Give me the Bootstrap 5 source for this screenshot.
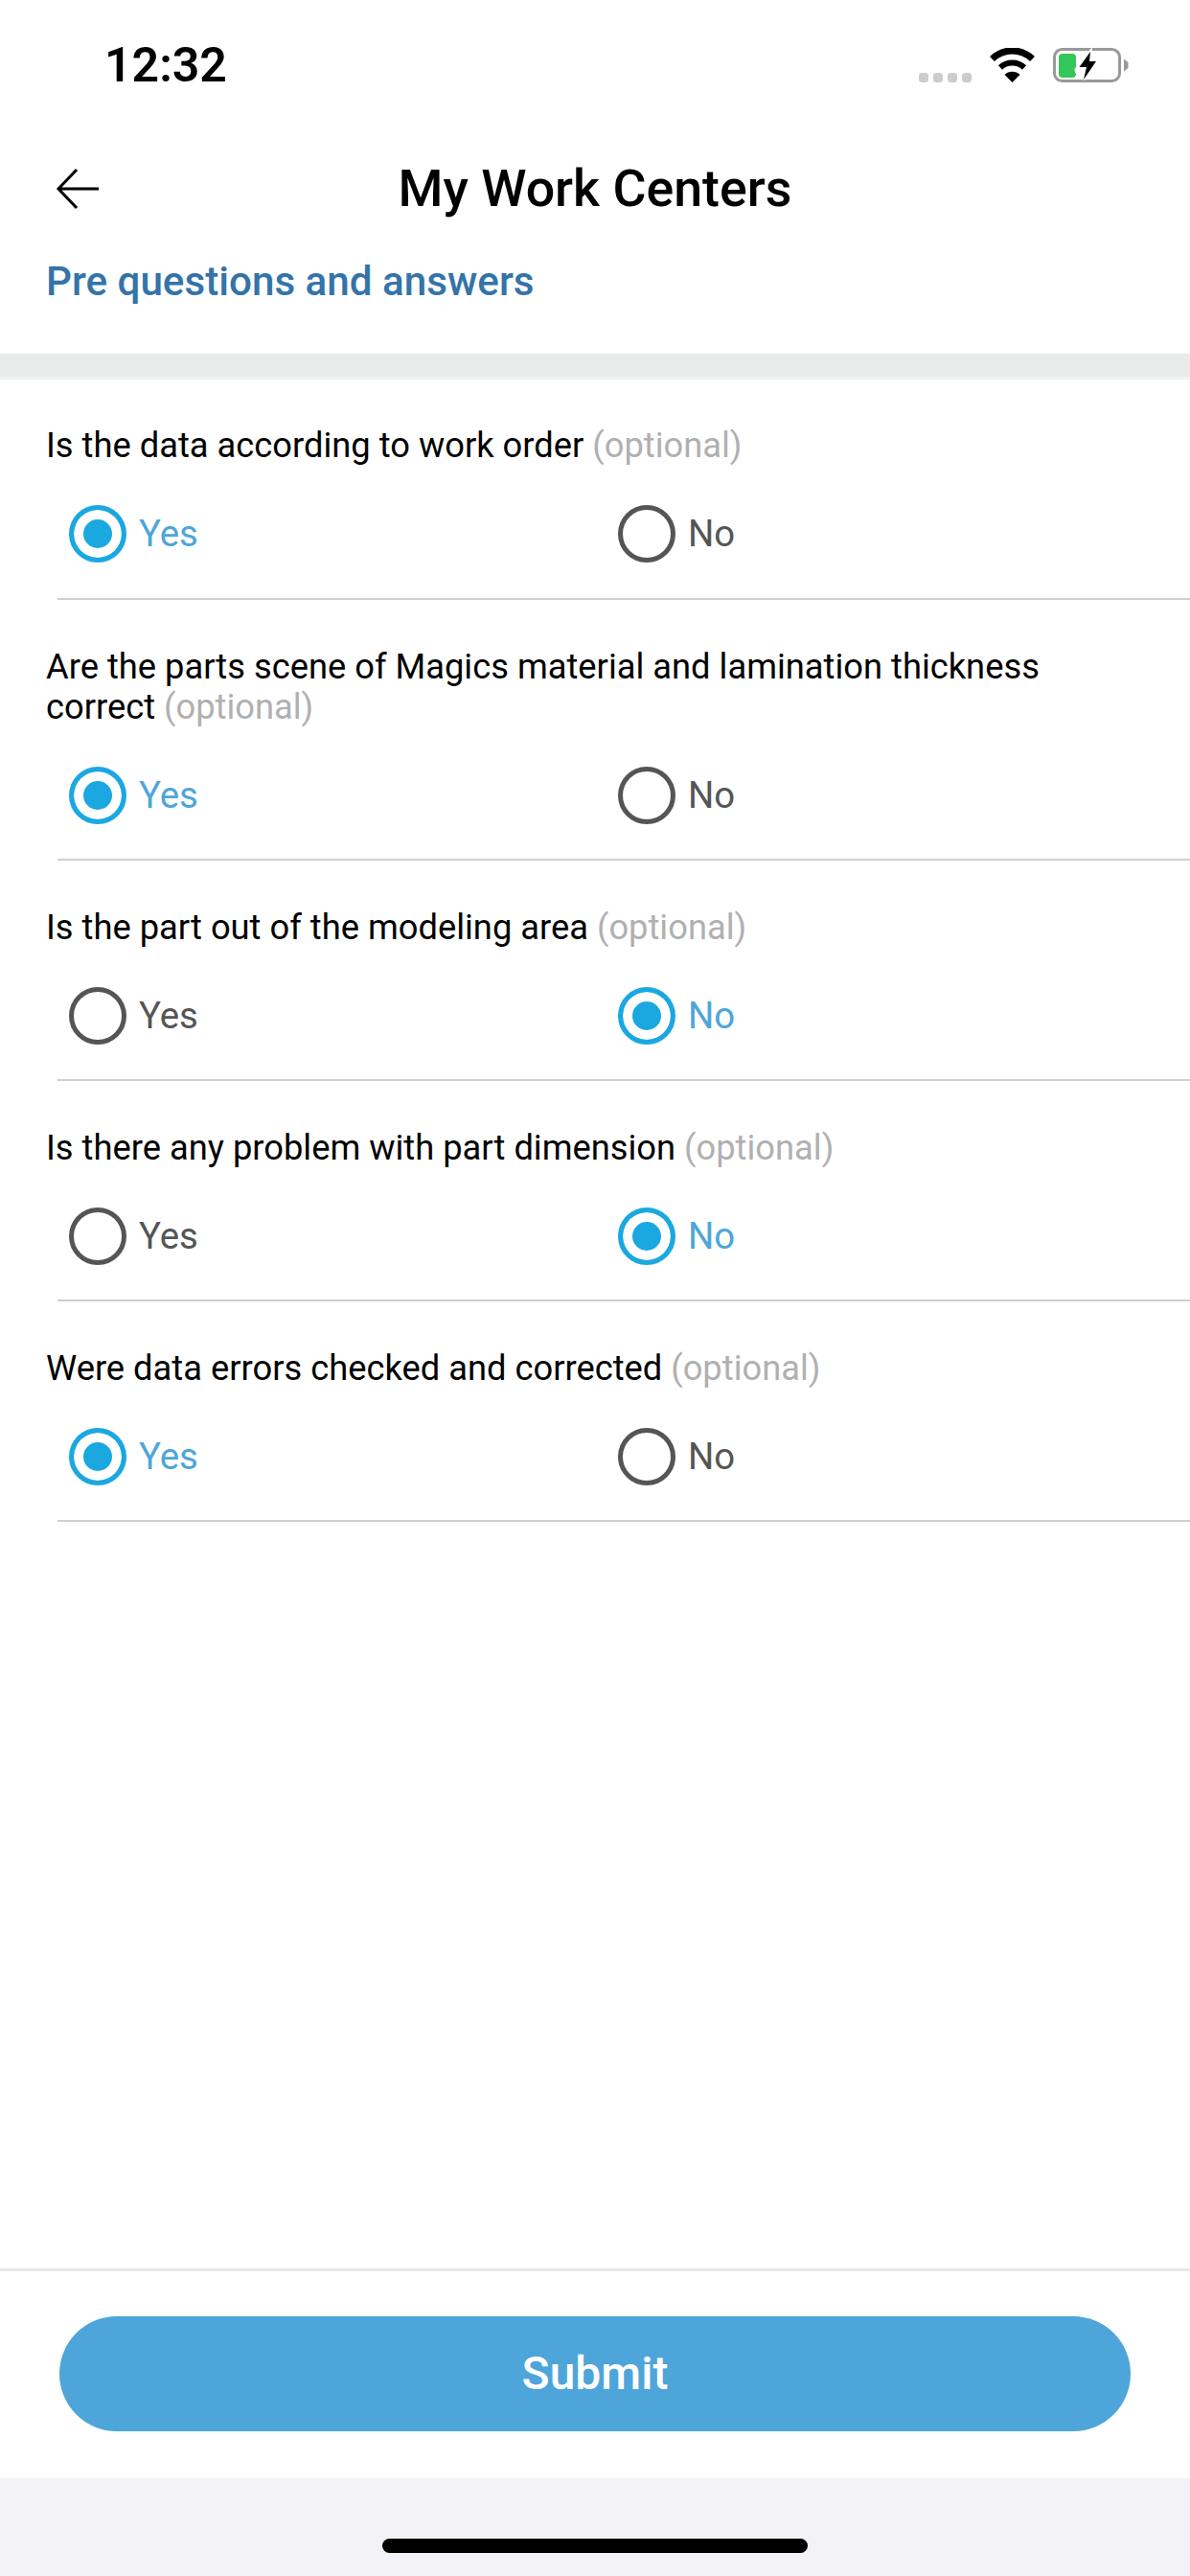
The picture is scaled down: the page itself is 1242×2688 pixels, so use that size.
<!DOCTYPE html>
<html lang="en">
<head>
<meta charset="utf-8">
<title>My Work Centers</title>
<link href="https://cdn.jsdelivr.net/npm/bootstrap@5.3.0/dist/css/bootstrap.min.css" rel="stylesheet">
<style>
html,body{margin:0;height:2688px;background:#fff;font-family:Roboto,"Liberation Sans",sans-serif;}
.phone{width:1242px;height:2688px;overflow:hidden;}
.statusrow{height:134px;padding:2px 63px 0 109px;}
.clock{font-size:50px;font-weight:600;line-height:1;color:#000;}
.dots{gap:5px;margin-top:26px;margin-right:19px;}
.dots i{width:10px;height:10px;border-radius:3.5px;background:#ccc;display:block;}
.wifi{margin-right:19px;}
.titlerow{height:126px;position:relative;}
.titlerow h1{font-size:53.700px;font-weight:500;color:#000;margin:0;line-height:1;}
.backbtn{position:absolute;left:58px;top:41px;}
.subhead{font-size:42.200px;font-weight:500;color:#3474a8;line-height:50px;padding-left:48px;margin:0;height:109px;padding-top:9px;}
.band{height:24px;background:#e9ebeb;}
.band2{height:3px;background:#f2f2f7;}
.qitem{padding:49px 0 0 0;height:230px;position:relative;}
.qitem.first{padding-top:48px;}
.qitem.tall{height:272px;}
.qtext{font-size:36.300px;line-height:42px;color:#000;padding:0 48px;margin:0;}
.qtext .hint{color:#b0b0b0;}
.opts{padding:41px 0 0 72px;}
.opt{width:573px;gap:13px;margin:0;}
.opt label{font-size:38.300px;line-height:60px;color:#555;}
.opt input{width:60px;height:60px;margin:0;border:5px solid #555;background:#fff;flex:none;box-shadow:none;}
.opt input:checked{background:#1ba8e0;background-image:none;border-color:#1ba8e0;box-shadow:inset 0 0 0 10px #fff;}
.opt input:focus{box-shadow:none;border-color:#555;}
.opt input:checked:focus{box-shadow:inset 0 0 0 10px #fff;border-color:#1ba8e0;}
.opt input:checked + label{color:#4ea5da;}
.rule{position:absolute;left:60px;right:0;bottom:0;height:2px;background:#d0d0d0;}
.spacer{flex:1 1 auto;}
.footerbar{height:219px;border-top:3px solid #e8e8e8;padding:47px 62px 0;}
.submitbtn{width:1118px;height:120px;background:#4ea5da;border:0;border-radius:60px;color:#fff;font-size:48px;font-weight:500;padding:0;}
.submitbtn:hover{background:#4ea5da;color:#fff;}
.homearea{height:102px;background:#f2f2f7;padding-top:63px;}
.homebar{width:444px;height:15px;border-radius:7.500px;background:#000;}
</style>
</head>
<body>
<div class="phone d-flex flex-column">
  <div class="statusrow d-flex align-items-center justify-content-between">
    <div class="clock">12:32</div>
    <div class="d-flex align-items-center">
      <div class="dots d-flex"><i></i><i></i><i></i><i></i></div>
      <svg class="wifi" width="47" height="36" viewBox="0 0 47 36"><g fill="none" stroke="#000"><path d="M2.500 11.500A30 30 0 0 1 44.500 11.500" stroke-width="7"/><path d="M11 20.500A18 18 0 0 1 36 20.500" stroke-width="6"/></g><path d="M15.500 28A11.500 11.500 0 0 1 31.500 28L23.500 36Z" fill="#000"/></svg>
      <svg width="80" height="36" viewBox="0 0 80 36"><rect x="1.500" y="1.500" width="68" height="33" rx="8" fill="none" stroke="#999" stroke-width="3"/><path d="M74 11.500L78.500 15V21L74 24.500Z" fill="#999"/><path d="M10 6H20Q24 6 24 10V20Q21 23 24 27Q24 31 20 31H10Q6 31 6 27V10Q6 6 10 6Z" fill="#34c759"/><path d="M39 4L27.500 20H35L32 33L45 14H38Z" fill="#000" stroke="#fff" stroke-width="3" paint-order="stroke" stroke-linejoin="miter"/></svg>
    </div>
  </div>
  <div class="titlerow d-flex align-items-center justify-content-center">
    <svg class="backbtn" width="48" height="44" viewBox="0 0 48 44"><path d="M22 2L3 22L22 42M3 22H45" fill="none" stroke="#000" stroke-width="3"/></svg>
    <h1>My Work Centers</h1>
  </div>
  <p class="subhead">Pre questions and answers</p>
  <div class="band"></div>
  <div class="band2"></div>

  <div class="qitem first">
    <p class="qtext">Is the data according to work order <span class="hint">(optional)</span></p>
    <div class="opts d-flex">
      <div class="opt d-flex align-items-center"><input class="form-check-input" type="radio" name="q1" id="q1y" checked><label for="q1y">Yes</label></div>
      <div class="opt d-flex align-items-center"><input class="form-check-input" type="radio" name="q1" id="q1n"><label for="q1n">No</label></div>
    </div>
    <div class="rule"></div>
  </div>
  <div class="qitem tall">
    <p class="qtext"><span class="d-block">Are the parts scene of Magics material and lamination thickness</span><span class="d-block">correct <span class="hint">(optional)</span></span></p>
    <div class="opts d-flex">
      <div class="opt d-flex align-items-center"><input class="form-check-input" type="radio" name="q2" id="q2y" checked><label for="q2y">Yes</label></div>
      <div class="opt d-flex align-items-center"><input class="form-check-input" type="radio" name="q2" id="q2n"><label for="q2n">No</label></div>
    </div>
    <div class="rule"></div>
  </div>
  <div class="qitem">
    <p class="qtext">Is the part out of the modeling area <span class="hint">(optional)</span></p>
    <div class="opts d-flex">
      <div class="opt d-flex align-items-center"><input class="form-check-input" type="radio" name="q3" id="q3y"><label for="q3y">Yes</label></div>
      <div class="opt d-flex align-items-center"><input class="form-check-input" type="radio" name="q3" id="q3n" checked><label for="q3n">No</label></div>
    </div>
    <div class="rule"></div>
  </div>
  <div class="qitem">
    <p class="qtext">Is there any problem with part dimension <span class="hint">(optional)</span></p>
    <div class="opts d-flex">
      <div class="opt d-flex align-items-center"><input class="form-check-input" type="radio" name="q4" id="q4y"><label for="q4y">Yes</label></div>
      <div class="opt d-flex align-items-center"><input class="form-check-input" type="radio" name="q4" id="q4n" checked><label for="q4n">No</label></div>
    </div>
    <div class="rule"></div>
  </div>
  <div class="qitem">
    <p class="qtext">Were data errors checked and corrected <span class="hint">(optional)</span></p>
    <div class="opts d-flex">
      <div class="opt d-flex align-items-center"><input class="form-check-input" type="radio" name="q5" id="q5y" checked><label for="q5y">Yes</label></div>
      <div class="opt d-flex align-items-center"><input class="form-check-input" type="radio" name="q5" id="q5n"><label for="q5n">No</label></div>
    </div>
    <div class="rule"></div>
  </div>

  <div class="spacer"></div>
  <div class="footerbar">
    <button type="button" class="btn submitbtn d-block">Submit</button>
  </div>
  <div class="homearea"><div class="homebar mx-auto"></div></div>
</div>
<script src="https://cdn.jsdelivr.net/npm/bootstrap@5.3.0/dist/js/bootstrap.bundle.min.js"></script>
</body>
</html>
